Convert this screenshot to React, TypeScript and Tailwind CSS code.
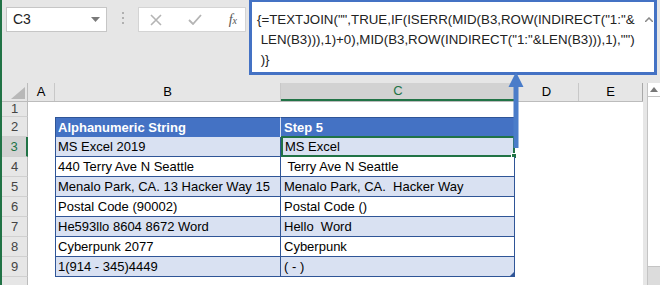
import React from 'react';

type Row = { n: number; b: string; c: string };

const rows: Row[] = [
    { n: 3, b: 'MS Excel 2019', c: 'MS Excel' },
    { n: 4, b: '440 Terry Ave N Seattle', c: ' Terry Ave N Seattle' },
    { n: 5, b: 'Menalo Park, CA. 13 Hacker Way 15', c: 'Menalo Park, CA.  Hacker Way' },
    { n: 6, b: 'Postal Code (90002)', c: 'Postal Code ()' },
    { n: 7, b: 'He593llo 8604 8672 Word', c: 'Hello  Word' },
    { n: 8, b: 'Cyberpunk 2077', c: 'Cyberpunk' },
    { n: 9, b: '1(914 - 345)4449', c: '( - )' },
];

const font = { fontFamily: '"Liberation Sans", Arial, sans-serif' };

const RowHead: React.FC<{ n?: number; h: string; active?: boolean }> = ({ n, h, active }) => (
    <div
        className={`w-[26px] ${h} shrink-0 flex items-center justify-center text-[13px] border-b border-[#d0d0d0] ${
            active ? 'bg-[#d2d2d2] text-[#217346] border-r-2 border-r-[#217346]' : 'bg-[#e6e6e6] text-[#444] border-r border-r-[#bcbcbc]'
        }`}
    >
        {n}
    </div>
);

const App: React.FC = () => {
    return (
        <div className="relative w-[660px] h-[285px] overflow-hidden bg-[#e6e6e6] border-l-2 border-[#217346] text-black" style={font}>
            {/* formula bar */}
            <div className="h-[83px] flex items-start">
                <div className="mt-[7px] ml-[4px] w-[101px] h-[25px] bg-white border border-[#c6c6c6] flex items-center justify-between pl-[6px] pr-[6px]">
                    <span className="text-[14px] text-[#222]">C3</span>
                    <svg width="9" height="5" viewBox="0 0 9 5"><path d="M0 0h9L4.5 5z" fill="#7a7a7a" /></svg>
                </div>
                <div className="mt-[12px] ml-[15px] w-[3px] flex flex-col gap-[3px]">
                    <span className="w-[2px] h-[2px] bg-[#b0b0b0]" />
                    <span className="w-[2px] h-[2px] bg-[#b0b0b0]" />
                    <span className="w-[2px] h-[2px] bg-[#b0b0b0]" />
                </div>
                <div className="mt-[7px] ml-[13px] w-[108px] h-[25px] bg-white border border-[#d4d4d4] flex items-center justify-between pl-[11px] pr-[8px]">
                    <svg width="12" height="12" viewBox="0 0 12 12"><path d="M1 1l10 10M11 1L1 11" stroke="#b4b4b4" strokeWidth="1.6" /></svg>
                    <svg width="14" height="11" viewBox="0 0 14 11"><path d="M1 6l4 4 8-9" stroke="#b4b4b4" strokeWidth="1.8" fill="none" /></svg>
                    <span className="text-[14px] italic text-[#555]" style={{ fontFamily: '"Liberation Serif", serif' }}>
                        f<span className="text-[10px]">x</span>
                    </span>
                </div>
                <div className="relative ml-[3px] -mt-[1px] w-[408px] h-[76px] bg-white border-[3px] border-[#4472c4] pl-[5px] pt-[8px] text-[13.3px] leading-[20px] text-[#222] whitespace-pre">
                    <div>{'{=TEXTJOIN("",TRUE,IF(ISERR(MID(B3,ROW(INDIRECT("1:"&'}</div>
                    <div>{' LEN(B3))),1)+0),MID(B3,ROW(INDIRECT("1:"&LEN(B3))),1),"")'}</div>
                    <div>{' )}'}</div>
                    <svg className="absolute right-[1px] top-[15px]" width="8" height="5" viewBox="0 0 8 5"><path d="M0 5L4 1l4 4" stroke="#888" strokeWidth="1.5" fill="none" /></svg>
                </div>
            </div>

            {/* sheet */}
            <div className="flex">
                <div className="w-[641px] bg-white">
                    {/* column headers */}
                    <div className="flex h-[19px] bg-[#e6e6e6] text-[13px] border-b border-[#bcbcbc]">
                        <div className="w-[26px] shrink-0 border-r border-[#bcbcbc] flex items-end justify-end pr-[2px] pb-[2px]">
                            <svg width="14" height="12" viewBox="0 0 14 12"><path d="M14 0v12H0z" fill="#b8b8b8" /></svg>
                        </div>
                        <div className="w-[27px] shrink-0 border-r border-[#c8c8c8] flex items-center justify-center">A</div>
                        <div className="w-[226px] shrink-0 border-r border-[#c8c8c8] flex items-center justify-center">B</div>
                        <div className="w-[234px] shrink-0 bg-[#d2d2d2] border-b-2 border-[#217346] flex items-center justify-center text-[#217346]">C</div>
                        <div className="w-[64px] shrink-0 border-r border-[#c8c8c8] flex items-center justify-center">D</div>
                        <div className="w-[64px] shrink-0 border-r border-[#a8a8a8] flex items-center justify-center">E</div>
                    </div>

                    {/* row 1 */}
                    <div className="flex">
                        <RowHead n={1} h="h-[15px]" />
                    </div>

                    {/* row 2: table header */}
                    <div className="flex h-[20px] text-[13px]">
                        <RowHead n={2} h="h-[20px]" />
                        <div className="w-[27px] shrink-0" />
                        <div className="w-[226px] shrink-0 bg-[#4472c4] text-white font-bold flex items-center pl-[2px] border-t border-l border-[#2f5597] border-r border-r-[#d9e1f2]">
                            Alphanumeric String
                        </div>
                        <div className="w-[234px] shrink-0 bg-[#4472c4] text-white font-bold flex items-center pl-[3px] border-t border-[#2f5597] border-r">
                            Step 5
                        </div>
                    </div>

                    {rows.map((r, i) => {
                        const band = i % 2 === 0 ? 'bg-[#d9e1f2]' : 'bg-white';
                        const sel = r.n === 3;
                        return (
                            <div key={r.n} className="flex h-[20px] text-[13px]">
                                <RowHead n={r.n} h="h-[20px]" active={sel} />
                                <div className="w-[27px] shrink-0" />
                                <div className={`w-[226px] shrink-0 ${band} flex items-center pl-[2px] border-l border-r border-b border-[#2f5597] whitespace-pre`}>
                                    {r.b}
                                </div>
                                <div
                                    className={`relative w-[234px] shrink-0 ${band} flex items-center whitespace-pre ${
                                        sel ? 'border-2 border-[#217346] -mt-[1px] h-[21px] pl-[2px]' : 'border-r border-b border-[#2f5597] pl-[3px]'
                                    }`}
                                >
                                    {r.c}
                                    {sel && (
                                        <span className="absolute -right-[4px] -bottom-[4px] w-[6px] h-[6px] bg-[#217346] border border-white" />
                                    )}
                                    {r.n === 9 && (
                                        <svg className="absolute right-0 bottom-0" width="4" height="4" viewBox="0 0 4 4"><path d="M4 0v4H0z" fill="#2f5597" /></svg>
                                    )}
                                </div>
                            </div>
                        );
                    })}

                    {/* row 10, cut off by the window */}
                    <div className="flex">
                        <RowHead h="h-[20px]" />
                    </div>
                </div>

                {/* scrollbar */}
                <div className="w-[17px] pl-[4px] bg-[#e6e6e6]">
                    <div className="h-full bg-[#dcdcdc] border-l border-[#c4c4c4] flex flex-col">
                        <div className="h-[14px] bg-white border-b border-[#c4c4c4] flex items-center justify-center">
                            <svg width="8" height="5" viewBox="0 0 8 5"><path d="M0 5L4 0l4 5z" fill="#777" /></svg>
                        </div>
                        <div className="h-[170px] bg-white border-b border-[#c4c4c4]" />
                        <div className="flex-1 bg-[#dcdcdc]" />
                    </div>
                </div>
            </div>

            {/* arrow pointing to formula */}
            <svg className="absolute left-[506px] top-[72px]" width="16" height="78" viewBox="0 0 16 78">
                <path d="M8 0L15.5 15H10.5V76H5.5V15H0.5z" fill="#4a7cc9" />
            </svg>
        </div>
    );
};

export default App;
